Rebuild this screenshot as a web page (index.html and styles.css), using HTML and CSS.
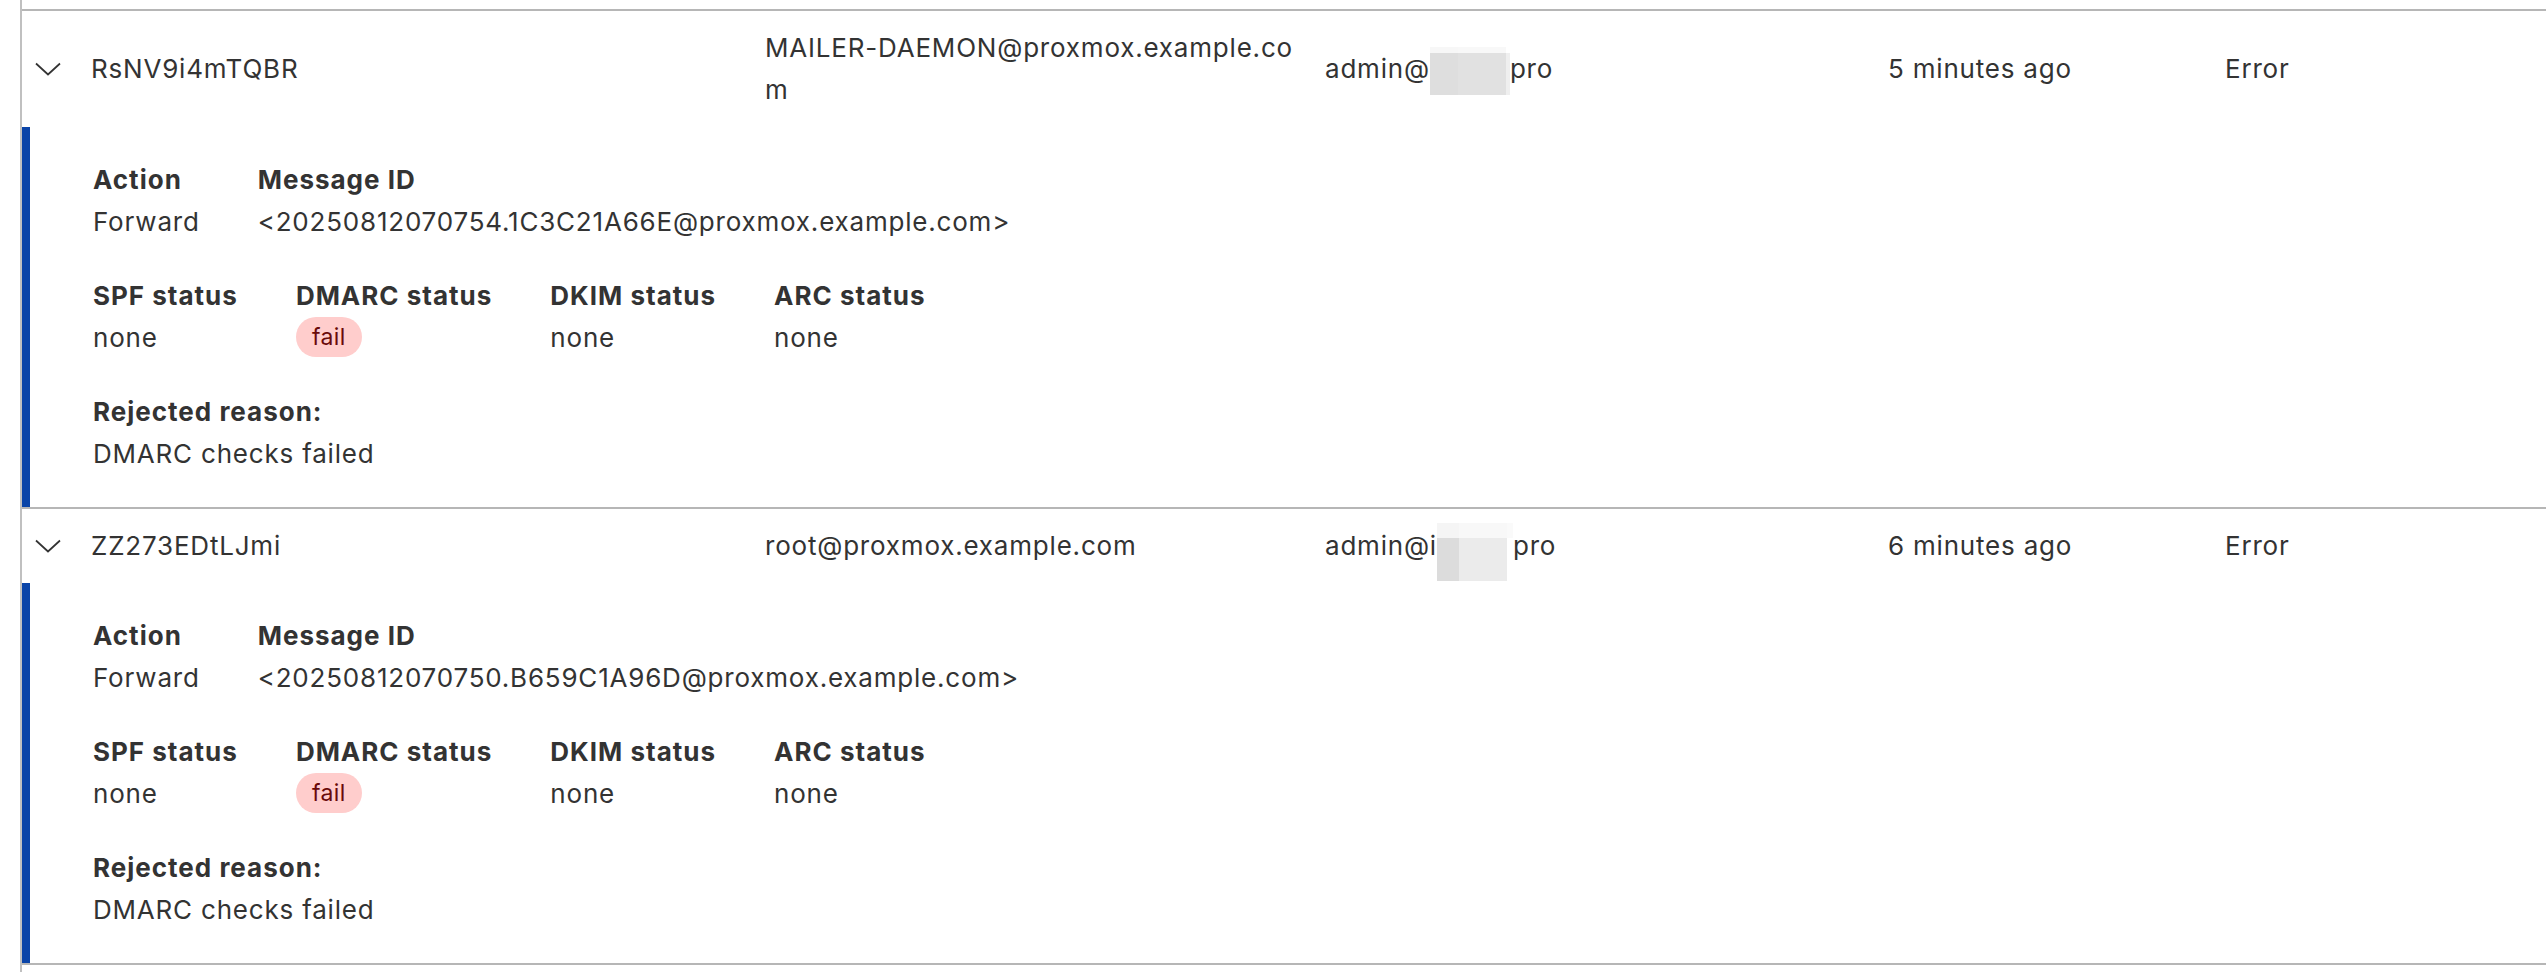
FILE: index.html
```html
<!DOCTYPE html>
<html lang="en">
<head>
<meta charset="utf-8">
<title>Tracking</title>
<link rel="stylesheet" href="styles.css">
</head>
<body>
<div class="table">
  <div class="row">
    <div class="head">
      <div class="cell chev"><svg width="26" height="14" viewBox="0 0 26 14"><polyline points="1,1.5 13,12.5 25,1.5" fill="none" stroke="#333" stroke-width="1.7"/></svg></div>
      <div class="cell">RsNV9i4mTQBR</div>
      <div class="cell from"><span class="wrap">MAILER-DAEMON@proxmox.example.com</span></div>
      <div class="cell">admin@<span class="redact r1"><i class="a"></i><i class="b"></i><i class="c"></i></span>pro</div>
      <div class="cell">5 minutes ago</div>
      <div class="cell">Error</div>
    </div>
    <div class="details">
      <div class="group">
        <div class="field"><div class="label">Action</div><div class="value">Forward</div></div>
        <div class="field"><div class="label">Message ID</div><div class="value">&lt;20250812070754.1C3C21A66E@proxmox.example.com&gt;</div></div>
      </div>
      <div class="group">
        <div class="field"><div class="label">SPF status</div><div class="value">none</div></div>
        <div class="field"><div class="label">DMARC status</div><div class="value"><span class="badge">fail</span></div></div>
        <div class="field"><div class="label">DKIM status</div><div class="value">none</div></div>
        <div class="field"><div class="label">ARC status</div><div class="value">none</div></div>
      </div>
      <div class="group">
        <div class="field"><div class="label">Rejected reason:</div><div class="value">DMARC checks failed</div></div>
      </div>
    </div>
  </div>
  <div class="row last">
    <div class="head">
      <div class="cell chev"><svg width="26" height="14" viewBox="0 0 26 14"><polyline points="1,1.5 13,12.5 25,1.5" fill="none" stroke="#333" stroke-width="1.7"/></svg></div>
      <div class="cell">ZZ273EDtLJmi</div>
      <div class="cell from"><span class="wrap">root@proxmox.example.com</span></div>
      <div class="cell">admin@i<span class="redact r2"><i class="a"></i><i class="b"></i><i class="c"></i></span>pro</div>
      <div class="cell">6 minutes ago</div>
      <div class="cell">Error</div>
    </div>
    <div class="details">
      <div class="group">
        <div class="field"><div class="label">Action</div><div class="value">Forward</div></div>
        <div class="field"><div class="label">Message ID</div><div class="value">&lt;20250812070750.B659C1A96D@proxmox.example.com&gt;</div></div>
      </div>
      <div class="group">
        <div class="field"><div class="label">SPF status</div><div class="value">none</div></div>
        <div class="field"><div class="label">DMARC status</div><div class="value"><span class="badge">fail</span></div></div>
        <div class="field"><div class="label">DKIM status</div><div class="value">none</div></div>
        <div class="field"><div class="label">ARC status</div><div class="value">none</div></div>
      </div>
      <div class="group">
        <div class="field"><div class="label">Rejected reason:</div><div class="value">DMARC checks failed</div></div>
      </div>
    </div>
  </div>
</div>
</body>
</html>
```
FILE: styles.css
```css
html, body {
  margin: 0;
  padding: 0;
  background: #ffffff;
}
body {
  font-family: Inter, "Noto Sans", sans-serif;
  font-size: 26px;
  line-height: 42px;
  letter-spacing: 0.8px;
  color: #333333;
}
.table {
  margin-left: 20px;
  border-left: 2px solid #c0c0c0;
  padding-top: 9px;
  min-height: 963px;
}
.row {
  border-top: 2px solid #b6b6b6;
}
.row.last {
  border-bottom: 2px solid #b6b6b6;
}
.head {
  display: grid;
  grid-template-columns: 69px 674px 560px 563px 337px 1fr;
  align-items: center;
  padding: 16px 0;
}
.cell {
  line-height: 42px;
}
.chev {
  padding-left: 13px;
  display: flex;
  align-items: center;
  height: 42px;
}
.chev svg {
  display: block;
}
.from .wrap {
  display: block;
  max-width: 538px;
  word-break: break-all;
}
.redact {
  display: inline-flex;
  vertical-align: middle;
  width: 80px;
  height: 48px;
  margin: -20px 0;
}
.redact i {
  display: block;
  height: 100%;
}
.r1 .a { width: 28px; background: linear-gradient(#f7f7f7 0 6px, #dedede 6px); }
.r1 .b { width: 48px; background: linear-gradient(#f8f8f8 0 6px, #e1e1e1 6px); }
.r1 .c { width: 4px; background: linear-gradient(#ffffff 0 6px, #efefef 6px); }
.r2 { width: 76px; height: 58px; margin: -20px 0 -28px; }
.r2 .a { width: 22px; background: linear-gradient(#f5f5f5 0 15px, #dcdcdc 15px); }
.r2 .b { width: 48px; background: linear-gradient(#f8f8f8 0 15px, #ebebeb 15px); }
.r2 .c { width: 6px; background: linear-gradient(#fafafa 0 15px, #ffffff 15px); }
.details {
  border-left: 8px solid #0a44a8;
  padding: 32px 0 32px 63px;
  display: flex;
  flex-direction: column;
  gap: 32px;
}
.group {
  display: flex;
  gap: 58px;
}
.field {
  display: flex;
  flex-direction: column;
}
.label {
  font-weight: 700;
  letter-spacing: 1px;
  color: #333333;
}
.badge {
  display: inline-block;
  vertical-align: top;
  height: 40px;
  line-height: 40px;
  padding: 0 16px;
  border-radius: 20px;
  background: #ffcdcc;
  color: #6a0a0a;
  font-size: 23px;
  letter-spacing: 0.4px;
}
```
